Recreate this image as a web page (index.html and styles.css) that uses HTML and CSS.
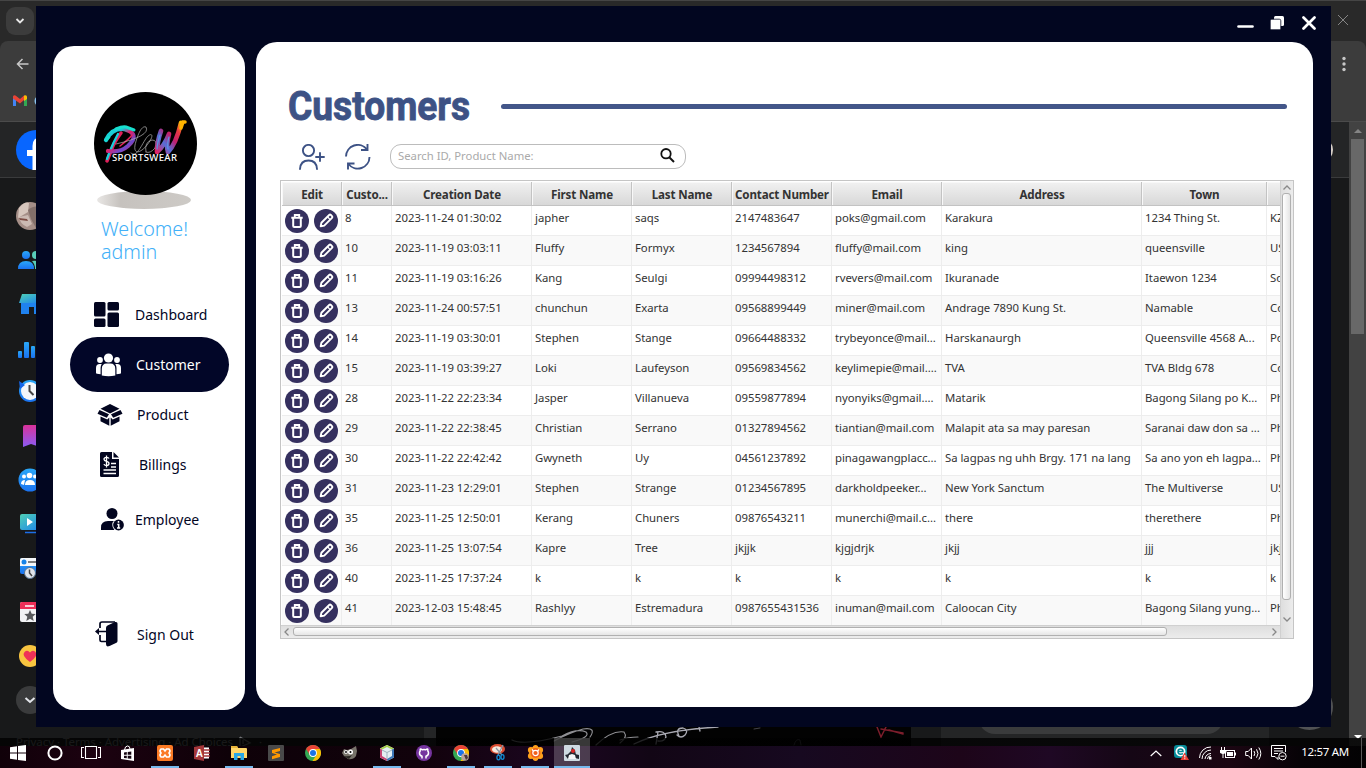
FILE: index.html
```html
<!DOCTYPE html>
<html lang="en">
<head>
<meta charset="utf-8">
<title>Customers</title>
<link rel="stylesheet" href="styles.css">
</head>
<body>
<svg class="defs" width="0" height="0">
  <defs>
    <linearGradient id="gBlue" x1="0" y1="0" x2="0" y2="1"><stop offset="0" stop-color="#2aa8f8"/><stop offset="1" stop-color="#1a72f0"/></linearGradient>
    <linearGradient id="gTeal" x1="0" y1="0" x2="1" y2="1"><stop offset="0" stop-color="#4fd0b5"/><stop offset="1" stop-color="#1a80f0"/></linearGradient>
    <linearGradient id="gPink" x1="0" y1="0" x2="0" y2="1"><stop offset="0" stop-color="#d9329a"/><stop offset="1" stop-color="#8a5cf5"/></linearGradient>
    <linearGradient id="gP" x1="0" y1="0" x2="1" y2="1"><stop offset="0" stop-color="#16e0d8"/><stop offset=".3" stop-color="#1bc4d8"/><stop offset=".5" stop-color="#e01e68"/><stop offset=".75" stop-color="#6a4bd0"/><stop offset="1" stop-color="#e01e50"/></linearGradient>
    <linearGradient id="gW" x1="0" y1="1" x2="1" y2="0"><stop offset="0" stop-color="#e02468"/><stop offset=".3" stop-color="#5470d8"/><stop offset=".55" stop-color="#c01e70"/><stop offset=".8" stop-color="#e83a40"/><stop offset="1" stop-color="#ffc400"/></linearGradient>
    <linearGradient id="gShadow"><stop offset="0" stop-color="#e9e7e5"/><stop offset=".25" stop-color="#c6c2be"/><stop offset="1" stop-color="#cdcac6"/></linearGradient>
    <symbol id="trash" viewBox="0 0 24 24"><circle cx="12" cy="12" r="12" fill="#35305f"/><path d="M6.300 8.700h11.400M9.800 8V6h4.400v2" fill="none" stroke="#fff" stroke-width="1.900"/><path d="M8.200 9v8q0 1 1 1h5.600q1 0 1-1V9" fill="none" stroke="#fff" stroke-width="2"/></symbol>
    <symbol id="pencil" viewBox="0 0 24 24"><circle cx="12" cy="12" r="12" fill="#35305f"/><g transform="rotate(45 12 12)" fill="none" stroke="#fff" stroke-width="1.900" stroke-linejoin="round"><path d="M10 5.500q0-1.200 1.200-1.200h1.600q1.200 0 1.200 1.200v11L12 19.500l-2-3z"/><path d="M10 8h4" stroke-width="1.300"/></g></symbol>
    <symbol id="chrome" viewBox="0 0 16 16"><circle cx="8" cy="8" r="8" fill="#34a853"/><path d="M1.100 4A8 8 0 0 1 14.900 4H8L5 10z" fill="#ea4335"/><path d="M14.900 4A8 8 0 0 1 7.500 16L11.500 10 8 4z" fill="#fbbc05"/><circle cx="8" cy="8" r="3.900" fill="#fff"/><circle cx="8" cy="8" r="3" fill="#1a73e8"/></symbol>
  </defs>
</svg>

<div class="desktop">
  <div class="browser">
    <div class="tabstrip"><span class="tab-menu"><svg width="10" height="8" viewBox="0 0 10 8"><path d="M1.500 2 5 5.500 8.500 2" fill="none" stroke="#e8e8e8" stroke-width="1.800"/></svg></span><svg class="browser-close" width="12" height="12"><path d="M1 1l10 10M11 1 1 11" stroke="#858585" stroke-width="1"/></svg></div>
    <div class="toolbar">
      <div class="toolbar-row"><svg width="13" height="12"><path d="M12.500 6H1.500M6.500 1 1.500 6l5 5" fill="none" stroke="#c7c7c7" stroke-width="1.500"/></svg><svg width="4" height="16" fill="#c7c7c7"><circle cx="2" cy="2.500" r="1.700"/><circle cx="2" cy="8" r="1.700"/><circle cx="2" cy="13.500" r="1.700"/></svg></div>
      <div class="bookmarks"><svg width="14" height="11" viewBox="0 0 14 11"><path d="M0 1v10h3V4z" fill="#4285f4"/><path d="M14 1v10h-3V4z" fill="#34a853"/><path d="M0 2Q0-.5 2.500.5L7 4l4-3.500V5L7 8.500 0 3.500z" fill="#ea4335"/><path d="M11 .5Q14-.5 14 2v2l-3 2z" fill="#fbbc04"/></svg><svg width="12" height="12"><circle cx="6" cy="6" r="4.500" fill="none" stroke="#8ac3ef" stroke-width="2"/></svg></div>
    </div>
    <div class="page">
      <div class="page-main">
        <div class="page-head"><svg width="40" height="40" viewBox="0 0 40 40"><circle cx="20" cy="20" r="20" fill="#0866ff"/><path d="M16.500 40V26H11v-6h5.500v-4q0-9 9-9h4v5.500h-3q-3.500 0-3.500 3.500v4h6l-1 6h-5v14z" fill="#fff"/></svg><i class="avatar-edge"></i></div>
        <div class="rail">
          <svg class="rail-icon" width="28" height="28" viewBox="0 0 28 28"><circle cx="14" cy="14" r="14" fill="#a58f88"/><path d="M3 6q6-7 10-5l-1 9-10 6z" fill="#d6c6bd"/><path d="M12 8q5-5 12-3l4 8-2 8-6 5-5-9z" fill="#83706a"/><path d="M3 15l9-2 4 9-5 3q-7-3-8-10z" fill="#cbbab3"/><path d="M3 16l8 1 1 2-8-1z" fill="#7b4b43"/></svg>
          <svg class="rail-icon" width="24" height="20" viewBox="0 0 24 20"><circle cx="8" cy="5" r="4" fill="url(#gBlue)"/><path d="M0 19q0-8 8-8t8 8z" fill="url(#gBlue)"/><circle cx="18" cy="5" r="4" fill="#59cdb9"/><path d="M14 11q9-2 10 8h-7q0-5-3-8z" fill="#59cdb9"/></svg>
          <svg class="rail-icon" width="24" height="22" viewBox="0 0 24 22"><path d="M3 9h21v11h-8v-7h-5v7H3z" fill="#1f82ef"/><path d="M4 0h20v9H1z" fill="url(#gTeal)"/></svg>
          <svg class="rail-icon" width="24" height="20" viewBox="0 0 24 20" fill="url(#gBlue)"><rect y="10" width="4" height="7" rx="1"/><rect x="6" y="1" width="5" height="16" rx="1"/><rect x="13" y="5" width="4" height="12" rx="1"/></svg>
          <svg class="rail-icon" width="24" height="24" viewBox="0 0 24 24"><circle cx="12" cy="12" r="11" fill="url(#gBlue)"/><circle cx="12" cy="12" r="9" fill="#f3f6fa"/><path d="M1 2l6 4-5 4z" fill="#1465e8"/><path d="M11.500 6v6l4 4" fill="none" stroke="#444" stroke-width="2"/></svg>
          <svg class="rail-icon" width="24" height="24" viewBox="0 0 24 24"><path d="M5 3q0-2 2-2h15v22l-9-3-8 3z" fill="url(#gPink)"/></svg>
          <svg class="rail-icon" width="24" height="24" viewBox="0 0 24 24"><circle cx="12" cy="12" r="11.500" fill="url(#gBlue)"/><g fill="#fff"><circle cx="6" cy="8.500" r="2"/><circle cx="11.500" cy="7.500" r="2.800"/><circle cx="17" cy="8.500" r="2"/><path d="M3 16q0-4 4-4l-1 5zM7 17q0-5 5-5t5 5z"/></g></svg>
          <svg class="rail-icon" width="24" height="22" viewBox="0 0 24 22"><rect x="2" y="1" width="23" height="16" rx="2" fill="url(#gTeal)"/><path d="M9 5v8l6-4z" fill="#fff"/><path d="M7 19.500h18" stroke="#1c6ee8" stroke-width="1.500"/></svg>
          <svg class="rail-icon" width="24" height="22" viewBox="0 0 24 22"><rect x="2" y="1" width="23" height="16" rx="2" fill="url(#gBlue)"/><path d="M2 9V3q0-2 2-2h20v8z" fill="#f5f7fa"/><circle cx="6" cy="5" r="2.500" fill="#1683e8"/><path d="M10 5h14" stroke="#555" stroke-width="1.500"/><circle cx="12" cy="16" r="5.500" fill="#dfe3ea" stroke="#537191"/><path d="M11.500 12.500V16l2.500 3" fill="none" stroke="#444" stroke-width="1.500"/></svg>
          <svg class="rail-icon" width="24" height="22" viewBox="0 0 24 22"><rect x="2" y="1" width="23" height="20" rx="2" fill="#f2f3f5"/><path d="M2 8V3q0-2 2-2h20v7z" fill="#ee2f58"/><path d="M7 5h9" stroke="#fff" stroke-width="1.500"/><path d="M12 9l1.700 3.700 4 .3-3 2.700 1 4.300-3.700-2.300L8.300 20l1-4.300-3-2.700 4-.3z" fill="#58595c"/></svg>
          <svg class="rail-icon" width="24" height="24" viewBox="0 0 24 24"><circle cx="12" cy="12" r="11" fill="#f8c440"/><path d="M12 18Q3 11.500 6.500 8q3-2.500 5.500.5Q14.500 5.500 17.500 8 21 11.500 12 18z" fill="#ef3158"/></svg>
          <svg class="rail-icon" width="28" height="28" viewBox="0 0 28 28"><circle cx="14" cy="14" r="14" fill="#3a3b3c"/><path d="M9.500 12l4.500 4 4.500-4" fill="none" stroke="#e4e6eb" stroke-width="2"/></svg>
        </div>
      </div>
      <div class="page-scroll"><i class="tri-up"></i><i class="scroll-thumb"></i><i class="tri-down"></i></div>
    </div>
    <div class="post-photo"><svg width="475" height="41" fill="none" stroke-linecap="round"><path d="M76 13q12 6 50-4 15-8 24-4 5 5-14 10M118 14q15-8 29-12 14-2 7 8M160 18q16-15 28-13 4 5-4 11M184 13q8-3 18-3" stroke="#8f8f93" stroke-width="1.200"/><path d="M198 17q28-14 84-17M222 5l-2 12M220 5q9-2 10 5-2 5-8 4M243 9q-4-8 4-8 6 2 2 7-4 4-8 0M263 0l1 4" stroke="#a9a9b2" stroke-width="1.300"/><path d="M358 18q2-7 6-5l1 5M318 2l6-1" stroke="#44444a"/><path d="M441 0l4 10 5-10M445 2l22 4M453 3l14 4" stroke="#7d1e2c" stroke-width="1.500"/></svg></div>
    <i class="post-col"></i><i class="chat-bubble"></i><i class="post-pill"></i>
    <span class="legal">Privacy · Terms · Advertising · Ad Choices <svg width="14" height="12"><path d="M1 1v10l10-4L1 1M4 4v4" fill="none" stroke="#77797c" stroke-width="1.300"/></svg> ·</span>
  </div>

  <main class="window">
    <header class="titlebar">
      <svg width="18" height="20"><path d="M2.500 13.500h14" stroke="#fff" stroke-width="2.600" stroke-linecap="round"/></svg>
      <svg width="14" height="14"><rect x="4" y="0" width="10" height="10" rx="1.500" fill="#fff"/><rect x=".2" y="3.200" width="10.600" height="10.600" rx="1.500" fill="#fff" stroke="#020620" stroke-width=".8"/></svg>
      <svg width="14" height="14"><path d="M1.500 1.500l11 11M12.500 1.500l-11 11" stroke="#fff" stroke-width="2.700" stroke-linecap="round"/></svg>
    </header>
    <div class="panels">
      <aside class="sidebar">
        <svg class="logo" width="104" height="119" viewBox="0 0 104 119">
          <ellipse cx="50" cy="108" rx="47" ry="9" fill="url(#gShadow)"/><circle cx="51.500" cy="51.500" r="51.500"/>
          <g fill="none" stroke-linecap="round">
            <path d="M27 41Q20 50 17 59l-4 10" stroke="#e01e58" stroke-width="3.500"/>
            <path d="M24 42q-5 9-8 17l-3 8" stroke="#18cfdc" stroke-width="2.300"/>
            <path d="M12 48Q18 36 30 37q17 5 4 17-8 7-20 5" stroke="url(#gP)" stroke-width="4.300"/>
            <path d="M22 37q7-3 10-2l8 3M12 48l3-3" stroke="#18dfcf" stroke-width="3"/>
            <path d="M26 54q9-7 12-11" stroke="#e5255a" stroke-width="1.500"/>
            <path d="M22 52Q57 44 52 35c-5-2-9 10-11 18-2 12 9 7 16-6 3-6-2-6-6 1-6 10-9 17-14 13M52 60q-2-10 6-12 6 0 3 8-5 6-9 4" stroke="#b5b5b5" stroke-width=".7"/>
            <path d="M67 39Q63 50 63 60q8-7 12-18Q72 53 74 60q8-8 13-29" stroke="url(#gW)" stroke-width="4.700" stroke-linejoin="round"/>
            <path d="M66 43q-3 9-3 14M75 45q-2 7-1 12" stroke="#5a95e4" stroke-width="1.200"/>
            <path d="M87 36l2-6h2" stroke="#ffb500" stroke-width="3.500"/>
          </g>
          <text x="18" y="69" textLength="65" fill="#fff" class="logo-text">SPORTSWEAR</text>
        </svg>
        <div class="welcome"><div>Welcome!</div><div>admin</div></div>
        <nav class="nav">
          <a class="nav-item dashboard"><svg width="26" height="26" viewBox="0 0 26 26" fill="#02051f"><rect width="11.500" height="14.500" rx="1.500"/><rect x="13.500" width="11.500" height="8.500" rx="1.500"/><rect y="16.500" width="11.500" height="8.500" rx="1.500"/><rect x="13.500" y="10.500" width="11.500" height="14.500" rx="1.500"/></svg><span>Dashboard</span></a>
          <a class="nav-item customer"><svg width="26" height="24" viewBox="0 0 26 24" fill="#fff"><circle cx="12.500" cy="5" r="4.600"/><circle cx="4" cy="7" r="2.900"/><circle cx="21" cy="7" r="2.900"/><path d="M5.800 22.500V16q0-5.500 5-5.500h3.500q5 0 5 5.500v6.500q-6.700 1.500-13.500 0zM4.600 21.200l-3.600-.5Q0 20.500 0 19.700V15q0-4 3.700-4h2Q4.600 13 4.600 15zM20.500 21.200l3.600-.5q.9-.2.900-1V15q0-4-3.700-4h-2q1.200 2 1.200 4z"/></svg><span>Customer</span></a>
          <a class="nav-item product"><svg width="26" height="22" viewBox="0 0 26 22" fill="#02051f"><path d="M13 0 22.500 4.700 13 9.500 3.500 4.700z"/><path d="M2.500 6 12 10.300 9.800 13.800 .5 9.800zM23.500 6 14 10.300l2.200 3.500 9.300-4zM3.500 12.600l6.800 3 2-2v8.200l-8.800-4.500zM22.500 12.600l-6.800 3-2-2v8.200l8.800-4.500z"/></svg><span>Product</span></a>
          <a class="nav-item billings"><svg width="19" height="25" viewBox="0 0 19 25"><path d="M1.500 0H12v7h7v16.500q0 1.500-1.500 1.500h-16Q0 25 0 23.500v-22Q0 0 1.500 0zM13.500 0 19 5.500h-5.500z" fill="#02051f"/><path d="M9 6.500Q8.500 5.300 6.500 5.300q-2.500 0-2.500 2 0 1.500 2.500 2t2.500 2.200q0 2-2.500 2Q4.200 13.500 4 12M6.500 3.500v12M11 11.500h5M11 15h5M3.500 18h12.500M3.500 21.500h12.500" fill="none" stroke="#fff" stroke-width="1.300"/></svg><span>Billings</span></a>
          <a class="nav-item employee"><svg width="24" height="23" viewBox="0 0 24 23"><circle cx="11" cy="5.500" r="5.500" fill="#02051f"/><path d="M0 22v-2.500q0-6.500 7-6.500h7l3 2v7z" fill="#02051f"/><circle cx="17.500" cy="17" r="6.200" fill="#fff"/><circle cx="17.500" cy="17" r="5.400" fill="#02051f"/><path d="M17.500 13v1.700M16.300 16.500h1.400v3.700M16 20h3.200" fill="none" stroke="#fff" stroke-width="1.500"/></svg><span>Employee</span></a>
        </nav>
        <a class="nav-item signout"><svg width="23" height="26" viewBox="0 0 23 26"><path d="M5 7V3q0-2 2-2h13M5 14v5q0 1.500 1.500 1.500H12M11 10.500H3" fill="none" stroke="#02051f" stroke-width="1.700"/><path d="M0 10.500 4 7v7z" fill="#02051f"/><path d="M11 7q0-1.800 1.500-2.500L20 1h1q1.500 0 1.500 1.500V20q0 1.300-1 1.800L14.500 25Q11 26.500 11 23z" fill="#02051f"/></svg><span>Sign Out</span></a>
      </aside>

      <section class="content">
        <div class="heading"><svg class="title" width="184" height="44" role="heading"><text x="1" y="36" textLength="182" lengthAdjust="spacingAndGlyphs">Customers</text></svg><i class="rule"></i></div>
        <div class="tools">
          <svg width="26" height="26" viewBox="0 0 26 26" fill="none" stroke="#3d5285" stroke-width="1.900" stroke-linecap="round"><circle cx="9.500" cy="6.500" r="5.600"/><path d="M1 25q.5-8.500 8.500-8.500T18 25M21 9v8M17 13h8"/></svg>
          <svg width="26" height="26" viewBox="0 0 26 26" fill="none" stroke="#3d5285" stroke-width="1.900"><path d="M1 12.500A11.700 11.700 0 0 1 22 5.500M16 6h6.500V0M24.500 13A11.700 11.700 0 0 1 3.500 20M9.500 19.500H3v6"/></svg>
          <div class="search"><span>Search ID, Product Name:</span><svg width="15" height="15"><circle cx="6" cy="5.700" r="4.700" fill="none" stroke="#111" stroke-width="1.800"/><path d="M9.500 9.500l4.500 4.500" stroke="#111" stroke-width="2"/></svg></div>
        </div>
        <div class="table">
          <div class="viewport" id="grid"></div>
          <div class="vbar"><svg width="8" height="5"><path d="M.5 4.500 4 1l3.500 3.500" fill="none" stroke="#888" stroke-width="1.300"/></svg><i></i><svg width="8" height="5"><path d="M.5.5 4 4 7.500.5" fill="none" stroke="#888" stroke-width="1.300"/></svg></div>
          <div class="hbar"><svg width="5" height="8"><path d="M4.500.5 1 4l3.500 3.500" fill="none" stroke="#888" stroke-width="1.300"/></svg><i></i><svg width="5" height="8"><path d="M.5.5 4 4 .5 7.500" fill="none" stroke="#888" stroke-width="1.300"/></svg></div>
        </div>
      </section>
    </div>
  </main>

  <footer class="taskbar">
    <div class="apps">
      <span><svg width="16" height="16" fill="#fff"><path d="M0 2.300 7 1.300v6.200H0zM8 1.100 16 0v7.500H8zM0 8.500h7v6.200l-7-1zM8 8.500h8V16l-8-1.100z"/></svg></span>
      <span><svg width="16" height="16"><circle cx="8" cy="8" r="6.600" fill="none" stroke="#fff" stroke-width="2"/></svg></span>
      <span><svg width="20" height="15" fill="none" stroke="#fff" stroke-width="1.100"><path d="M4.500 1.500h11v12h-11zM3 2.500H.5v10H3M17 2.500h2.500v10H17"/></svg></span>
      <span><svg width="16" height="16"><path d="M1 5l13-2v13L1 14z" fill="#fff"/><path d="M4.500 5q.5-4 3-4t2.500 3" fill="none" stroke="#fff"/><path d="M4 7.500l2.800-.4v2.700H4zM7.700 7l3.600-.5v3.300H7.700zM4 10.700h2.800v2.600L4 13zM7.700 10.700h3.600v3.100l-3.600-.4z" fill="#150510"/></svg></span>
      <span class="open"><svg width="16" height="16"><rect width="16" height="16" rx="2" fill="#fb7a24"/><path d="M4 4q-2 2 0 4-2 2 0 4h2.500L8 10l1.500 2H12q2-2 0-4 2-2 0-4H9.500L8 6 6.500 4z" fill="none" stroke="#fff" stroke-width="1.600"/></svg></span>
      <span><svg width="16" height="16"><path d="M9 2.500h6v11H9z" fill="#fff"/><path d="M9 5h7M9 8h7M9 11h7" stroke="#a4373a" stroke-width="1.300"/><path d="M0 2l10-2v16L0 14z" fill="#a4373a"/><text x="1.700" y="12" font-size="10" font-weight="700" fill="#fff" font-family="Liberation Sans">A</text></svg></span>
      <span class="open"><svg width="16" height="15"><path d="M0 1h6l1 2h8q1 0 1 1v9H0z" fill="#ffd76a"/><path d="M0 1h6l1 2H0z" fill="#e9b539"/><path d="M3 15V8h10v7H9.500v-4h-3v4z" fill="#27a8e8"/></svg></span>
      <span><svg width="16" height="16"><rect width="16" height="16" rx="1" fill="#494949"/><path d="M12 3v3L6.500 7.500 12 9v3l-8 2.200v-3L9 9.500 4 8V5z" fill="#ff9800"/></svg></span>
      <span><svg width="16" height="16"><use href="#chrome"/></svg></span>
      <span><svg width="16" height="16"><path d="M2 4l3 1 4-1 5-3 1 5-1 5q-3 4-8 3L2 11 0 8z" fill="#77736a"/><circle cx="4" cy="7" r="2" fill="#eee"/><circle cx="8.500" cy="7" r="2.500" fill="#fff"/><circle cx="4" cy="7" r=".9"/><circle cx="8.500" cy="7" r="1"/><path d="M1 11q6 1 9-1l-3 4z" fill="#282622"/></svg></span>
      <span class="open"><svg width="16" height="16"><path d="M8 0l7 3.500v9L8 16l-7-3.500v-9z" fill="#e4eef3"/><path d="M8 0l7 3.500-2 1L8 2 3 4.500l-2-1z" fill="#a6cf4b"/><path d="M1 3.500v9L8 16v-2l-5-3V4.500z" fill="#c54473"/><path d="M15 3.500v9L8 16v-2l5-3V4.500z" fill="#3d77b7"/><path d="M3 5l5 2.500L13 5M8 7.500V14" fill="none" stroke="#9db2bd"/></svg></span>
      <span><svg width="16" height="16"><circle cx="8" cy="8" r="8" fill="#75349e"/><path d="M6 13.500v-2.200Q3.500 10.500 3.500 8q0-1.300.7-2-.3-1.200.2-2 1 0 2 .8 1.600-.4 3.200 0 1-.8 2-.8.500.8.200 2 .7.700.7 2 0 2.500-2.500 3.300v2.200" fill="none" stroke="#fff" stroke-width="1.500"/></svg></span>
      <span class="open"><svg width="16" height="16"><use href="#chrome"/><circle cx="12" cy="12" r="3.800" fill="#b9a49b"/><path d="M11 10h3l1 3-2 2z" fill="#49383c"/></svg></span>
      <span class="open"><svg width="16" height="17"><ellipse cx="7.500" cy="5" rx="7.500" ry="5" fill="#db4d32"/><ellipse cx="7" cy="5.500" rx="5" ry="3.200" fill="#f7e9df"/><path d="M13 1 8 11M6 4l6 7" stroke="#8797a5" stroke-width="1.200"/><g fill="none" stroke="#118bd4" stroke-width="1.300"><ellipse cx="8.500" cy="13.500" rx="1.600" ry="2.300"/><ellipse cx="12.500" cy="13" rx="1.500" ry="2.300"/></g></svg></span>
      <span class="open split"><svg width="17" height="16" viewBox="0 0 17 16"><g fill="#ffa01c"><circle cx="8.500" cy="8" r="6.500"/><circle cx="8.500" cy="2.700" r="2.700"/><circle cx="3.800" cy="5" r="2.900"/><circle cx="13.200" cy="5" r="2.900"/><circle cx="3.800" cy="11" r="2.900"/><circle cx="13.200" cy="11" r="2.900"/><circle cx="8.500" cy="13.300" r="2.700"/></g><circle cx="8.500" cy="8" r="5" fill="#f1611b"/><circle cx="8.500" cy="8" r="2.700" fill="none" stroke="#fff" stroke-width="1.200"/><path d="M5 4.500l1.500 1.500M12 4.500 10.500 6" stroke="#fff" stroke-width="1.200"/></svg></span>
      <span class="open active"><svg width="16" height="16"><rect width="16" height="16" rx="1" fill="#cfdae2"/><path d="M8 2l3 3 1 5-3 4H4V9l3-3z" fill="#262a33"/><path d="M1 10l4-1 2 2-3 3zM11 9l4 1v4l-4-1z" fill="#222630"/><path d="M5 10l3-1 3 1 1 4H4z" fill="#f5f6f8"/><circle cx="9" cy="6" r="2" fill="#db2525"/></svg></span>
    </div>
    <div class="tray">
      <svg width="12" height="7"><path d="M.7 6 6 1l5.300 5" fill="none" stroke="#fff" stroke-width="1.200"/></svg>
      <svg class="eset" width="15" height="16"><rect width="13" height="13" rx="3" fill="#068c99"/><circle cx="6.500" cy="6.500" r="5" fill="#fff"/><path d="M4 6.500h5Q9 4 6.500 4T4 6.500t2.500 2.700L9 8.700" fill="none" stroke="#068c99" stroke-width="1.500"/><path d="M10.500 7.500 15 15H6.500z" fill="#e83d32"/><path d="M10.800 10v2.500M10.800 13.200v1" stroke="#fff"/></svg>
      <svg class="wifi" width="13" height="14"><g fill="none" stroke="#fff"><path d="M.5 12A11 11 0 0 1 12 1M3 13A9 9 0 0 1 12 4M6 13A6 6 0 0 1 12 7.500M8.500 13q0-3 3.500-3.500"/></g><rect x="10" y="11" width="2.500" height="2.500" fill="#fff"/></svg>
      <svg width="16" height="13"><rect x="5.500" y="3.500" width="9" height="7" fill="none" stroke="#fff"/><path d="M7 5h6v4H7zM15 5.500h1v3h-1z" fill="#fff"/><path d="M1.500 0v3M4.500 0v3M0 3.500h6v2q-3 2-6 0zM3 6v5" fill="#fff" stroke="#fff"/></svg>
      <svg width="17" height="13"><path d="M.7 4.500h2.500L6.500 1v11L3.200 8.500H.7z" fill="none" stroke="#fff"/><path d="M9 4q1.500 2.500 0 5M11.500 2.300q3 4.200 0 8.400M13.800.5q4 6 0 12" fill="none" stroke="#fff"/></svg>
      <svg width="16" height="16"><path d="M14.500 7V.5H.5v11H4l3 3v-2.500M3 3.500h9M3 6h9M3 8.500h4" fill="none" stroke="#fff"/><circle cx="11.500" cy="11.200" r="3.700" fill="#0d0309" stroke="#fff"/><path d="M9.500 11.200h4" stroke="#fff"/></svg>
      <time>12:57 AM</time><i class="peek"></i>
    </div>
  </footer>
</div>
<script src="app.js"></script>
</body>
</html>
```
FILE: styles.css
```css
* { box-sizing: border-box; }
body { margin: 0; overflow: hidden; font-family: "Noto Sans", "Open Sans", sans-serif; color: #333; }
svg { display: block; flex: none; }
i { display: block; }
.defs { position: absolute; }
.desktop { position: relative; width: 1366px; height: 768px; overflow: hidden; background: #18191a; }

/* Browser behind the application window */
.browser { height: 768px; display: flex; flex-direction: column; background: #292929; }
.tabstrip { height: 41px; border-top: 1px solid #454545; display: flex; justify-content: space-between; padding: 6px 17px 0 6px; flex: none; }
.tab-menu { width: 28px; height: 28px; border-radius: 9px; background: #3c3c3c; display: grid; place-items: center; }
.browser-close { margin-top: 7px; }
.toolbar { height: 81px; background: #3c3c3c; border-bottom: 1px solid #4b4b4b; border-radius: 8px 8px 0 0; flex: none; }
.toolbar-row { height: 46px; display: flex; align-items: center; justify-content: space-between; padding: 0 20px 0 16px; }
.bookmarks { height: 28px; display: flex; align-items: center; gap: 7px; padding: 0 0 1px 13px; }
.page { flex: 1; display: flex; background: #18191a; min-height: 0; }
.page-main { flex: 1; }
.page-head { height: 56px; background: #242526; border-bottom: 1px solid #3a3b3c; padding: 8px 16px 0 16px; display: flex; justify-content: space-between; }
.avatar-edge { width: 18px; height: 22px; border-radius: 50%; background: #d8d0c8; margin-top: 9px; }
.rail { display: flex; flex-direction: column; align-items: flex-start; padding: 24px 0 0 16px; }
.rail-icon { margin: 0 0 22px 2px; }
.rail-icon:nth-child(1) { margin: 0 0 20px; }
.rail-icon:nth-child(2) { margin-bottom: 24px; }
.rail-icon:nth-child(3) { margin-bottom: 25px; }
.rail-icon:nth-child(4) { margin-bottom: 18px; }
.rail-icon:nth-child(5) { margin-bottom: 21px; }
.rail-icon:nth-child(6) { margin-bottom: 20px; }
.rail-icon:nth-child(7), .rail-icon:nth-child(10) { margin-bottom: 21px; }
.rail-icon:nth-child(11) { margin-bottom: 18px; }
.rail-icon:nth-child(12) { margin: 0; }
.page-scroll { width: 17px; background: #424242; display: flex; flex-direction: column; align-items: center; padding-top: 7px; }
.tri-up { border: 4px solid transparent; border-top: 0; border-bottom-color: #858585; }
.scroll-thumb { width: 13px; height: 195px; background: #686868; margin-top: 6px; }
.tri-down { border: 4px solid transparent; border-bottom: 0; border-top-color: #fff; margin-top: auto; margin-bottom: 29px; }
.post-photo { position: absolute; left: 424px; top: 727px; width: 487px; height: 41px; background: #020202; border-left: 12px solid #242526; }
.post-col { position: absolute; left: 941px; top: 727px; width: 328px; height: 41px; background: #242526; }
.post-pill { position: absolute; left: 978px; top: 700px; width: 246px; height: 34px; border-radius: 17px; background: #3a3b3c; }
.chat-bubble { position: absolute; left: 1286px; top: 684px; width: 47px; height: 46px; border-radius: 50%; background: #515254; }
.legal { position: absolute; left: 16px; top: 733px; display: flex; align-items: center; gap: 3px; font-size: 11.500px; line-height: 18px; color: #77797c; white-space: pre; letter-spacing: -.05px; }

/* Application window */
.window { position: absolute; left: 36px; top: 6px; width: 1295px; height: 721px; background: #020620; }
.titlebar { height: 36px; display: flex; align-items: center; justify-content: flex-end; gap: 16px; padding: 0 15px 2px 0; }
.titlebar svg:last-child { margin-left: 2px; }
.panels { display: flex; gap: 11px; padding: 0 18px 0 17px; }
.sidebar { width: 192px; height: 664px; margin-top: 4px; background: #fff; border-radius: 21px; padding-top: 46px; }
.logo { margin-left: 41px; }
.logo-text { font: 500 9.600px "Noto Sans", sans-serif; }
.welcome { margin: 6px 0 0 48px; font-size: 19.700px; line-height: 23px; color: #42b0f8; font-weight: 350; }
.nav { margin-top: 28px; }
.nav-item { height: 50px; display: flex; align-items: center; font-size: 14px; color: #02051f; }
.dashboard { height: 46px; padding: 1px 0 0 41px; gap: 15px; }
.customer { width: 159px; height: 55px; margin-left: 17px; padding: 0 0 0 26px; gap: 14px; border-radius: 28px; background: #020628; color: #fff; }
.product { height: 45px; padding-left: 44px; gap: 14px; }
.billings { height: 55px; padding-left: 47px; gap: 20px; }
.employee { height: 55px; padding-left: 48px; gap: 10px; }
.signout { margin-top: 62px; padding-left: 42px; gap: 19px; }

.content { width: 1057px; height: 665px; background: #fff; border-radius: 21px; padding: 42px 19px 0 24px; }
.heading { display: flex; align-items: center; height: 44px; padding: 0 7px 0 7px; gap: 30px; }
.title { overflow: visible; }
.title text { font: bold 41px Roboto, "Liberation Sans", sans-serif; fill: #3d5285; stroke: #3d5285; stroke-width: .9px; }
.rule { flex: 1; height: 5px; border-radius: 3px; background: #435689; }
.tools { display: flex; align-items: center; height: 52px; padding: 5px 0 0 19px; gap: 20px; }
.tools .search { margin-left: -1px; }
.search { width: 296px; height: 25px; margin-top: -1px; border: 1px solid #bcbcbc; border-radius: 11px; display: flex; align-items: center; justify-content: space-between; padding: 0 10px 1px 7px; font-size: 11.300px; color: #aaa; }

/* Customer grid */
.table { width: 1014px; height: 459px; border: 1px solid #c5c5c5; display: grid; grid-template-columns: 999px 13px; grid-template-rows: 444px 13px; background: #e8e8e8; }
.viewport { overflow: hidden; background: #fff; padding: 1px 0 0 1px; }
.row { display: grid; grid-template-columns: 60px 50px 140px 100px 100px 100px 110px 200px 125px 100px; width: 1085px; height: 30px; background: #fff; }
.row:nth-child(odd) { background: #f9f9f9; }
.cell { border-right: 1px solid #ededed; border-bottom: 1px solid #ededed; padding: 4px 0 0 3px; font-size: 11.350px; line-height: 16px; letter-spacing: -.03px; white-space: nowrap; overflow: hidden; }
.head { height: 24px; }
.head .cell { background: linear-gradient(#f1f1f1, #d8d8d8); border-color: #c3c3c3; box-shadow: inset 1px 1px #f8f8f8; font-size: 11.600px; font-weight: 700; text-align: center; padding: 5px 0 0 1px; letter-spacing: -.15px; }
.actions { display: flex; gap: 5px; padding: 3px 0 0 3px; }
.vbar { display: flex; flex-direction: column; align-items: center; padding: 4px 1px 3px 0; background: linear-gradient(90deg, #dedede, #ececec); border-left: 1px solid #d0d0d0; }
.vbar i { width: 9px; height: 407px; margin: 3px 0 auto; border: 1px solid #b0b0b0; border-radius: 3px; background: linear-gradient(90deg, #fff, #e5e5e5); }
.hbar { display: flex; align-items: center; padding: 0 3px 1px 3px; background: linear-gradient(#dedede, #ececec); border-top: 1px solid #d0d0d0; }
.hbar i { width: 874px; height: 9px; margin: 0 auto 0 4px; border: 1px solid #b0b0b0; border-radius: 3px; background: linear-gradient(#fff, #e5e5e5); }
.table .vbar { grid-row: 1 / 3; grid-column: 2; padding-bottom: 16px; }
.table .hbar { grid-row: 2; grid-column: 1; }

/* Taskbar */
.taskbar { position: absolute; left: 0; top: 738px; width: 1366px; height: 30px; display: flex; justify-content: space-between; background: linear-gradient(rgba(0,0,0,.8) 8px, transparent 8px), linear-gradient(90deg, #100109 0, #1c0210 95px, #0e0108 230px, #11020b 420px, #1c0621 560px, #120615 650px, #170920 800px, #1d0519 960px, #1f0824 1050px, #150715 1130px, #1b0612 1230px, #070307 1300px, #030203 100%) 0 8px no-repeat; }
.apps { display: flex; }
.apps span { width: 36px; height: 30px; margin-right: 1px; display: grid; place-items: center; border-bottom: 2px solid transparent; padding-top: 1px; }
.apps span:nth-child(2) { margin-right: 0; }
.apps .open { width: 28px; margin: 0 5px 0 4px; border-color: #76b9ed; }
.apps .active { width: 36px; margin: 0; background: rgba(255,255,255,.22); }
.tray { display: flex; align-items: center; padding-right: 4px; }
.tray svg { margin-right: 9px; }
.tray .eset { margin: 0 10px 0 3px; }
.tray .wifi { margin-right: 8px; }
.tray time { font-size: 11.500px; letter-spacing: -.3px; color: #fff; margin: 0 12px 3px 5px; white-space: nowrap; }
.peek { width: 1px; height: 30px; background: #585858; }
```
FILE: app.js
```js
const columns = ['Edit', 'Custo...', 'Creation Date', 'First Name', 'Last Name', 'Contact Number', 'Email', 'Address', 'Town', ''];
const customers = `8|2023-11-24 01:30:02|japher|saqs|2147483647|poks@gmail.com|Karakura|1234 Thing St.|KZ
10|2023-11-19 03:03:11|Fluffy|Formyx|1234567894|fluffy@mail.com|king|queensville|US
11|2023-11-19 03:16:26|Kang|Seulgi|09994498312|rvevers@mail.com|Ikuranade|Itaewon 1234|So
13|2023-11-24 00:57:51|chunchun|Exarta|09568899449|miner@mail.com|Andrage 7890 Kung St.|Namable|Co
14|2023-11-19 03:30:01|Stephen|Stange|09664488332|trybeyonce@mail...|Harskanaurgh|Queensville 4568 A...|Po
15|2023-11-19 03:39:27|Loki|Laufeyson|09569834562|keylimepie@mail....|TVA|TVA Bldg 678|Co
28|2023-11-22 22:23:34|Jasper|Villanueva|09559877894|nyonyiks@gmail....|Matarik|Bagong Silang po K...|Ph
29|2023-11-22 22:38:45|Christian|Serrano|01327894562|tiantian@mail.com|Malapit ata sa may paresan|Saranai daw don sa ...|Ph
30|2023-11-22 22:42:42|Gwyneth|Uy|04561237892|pinagawangplacc...|Sa lagpas ng uhh Brgy. 171 na lang|Sa ano yon eh lagpa...|Ph
31|2023-11-23 12:29:01|Stephen|Strange|01234567895|darkholdpeeker...|New York Sanctum|The Multiverse|US
35|2023-11-25 12:50:01|Kerang|Chuners|09876543211|munerchi@mail.c...|there|therethere|Ph
36|2023-11-25 13:07:54|Kapre|Tree|jkjjk|kjgjdrjk|jkjj|jjj|jkj
40|2023-11-25 17:37:24|k|k|k|k|k|k|k
41|2023-12-03 15:48:45|Rashlyy|Estremadura|0987655431536|inuman@mail.com|Caloocan City|Bagong Silang yung...|Ph`.split('\n').map(line => line.split('|'));

const cell = text => `<div class="cell">${text}</div>`;
const icon = name => `<svg width="24" height="24"><use href="#${name}"/></svg>`;
const actions = `<div class="cell actions">${icon('trash')}${icon('pencil')}</div>`;

document.getElementById('grid').innerHTML =
  `<div class="row head">${columns.map(cell).join('')}</div>` +
  customers.map(c => `<div class="row">${actions}${c.map(cell).join('')}</div>`).join('');
```
